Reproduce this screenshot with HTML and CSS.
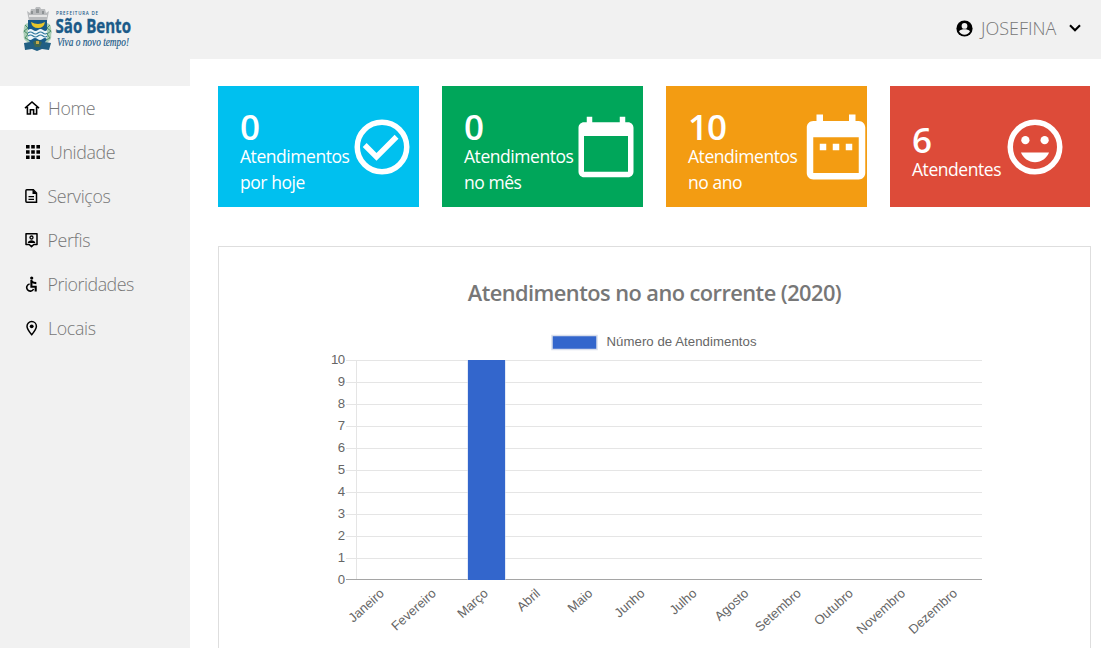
FILE: index.html
```
<!DOCTYPE html>
<html lang="pt-BR">
<head>
<meta charset="utf-8">
<title>São Bento</title>
<link rel="stylesheet" href="styles.css">
</head>
<body>
<header class="topbar">
  <svg class="logo" width="122" height="50" viewBox="0 0 122 50">
    <path d="M6 16C0 18 3 22 1 25c2 3-1 6 3 9l3 3V16zM25 16c6 2 3 6 5 9-2 3 1 6-3 9l-3 3V16z" fill="#a9cdb6"/>
    <path d="M3 18l3 3-4 3 4 3-3 4 4 2M28 18l-3 3 4 3-4 3 3 4-4 2" fill="none" stroke="#4d8f68"/>
    <path d="M5 4l3 2 1-4h4l1-2h4l1 2h4l1 4 3-2-2 10H7z" fill="#b9bbbd"/>
    <path d="M9 4v3h2V4zm5-2v4h3V2zm6 2v3h2V4z" fill="#8e9294"/>
    <path d="M7 9h18" stroke="#e5e5e5" stroke-width="2"/>
    <path d="M6 13h19v17q0 7-9.500 11Q6 37 6 30z" fill="#175a88"/>
    <path d="M9 15q7 4 14 0-1 6-7 6t-7-6z" fill="#e7c72c"/>
    <path d="M6 23q2.500-2 5 0t5 0 5 0 4 0v9q-2-2-4.500 0t-5 0-5 0-4.500 0z" fill="#edf5f8"/>
    <path d="M6 26q2.500-2 5 0t5 0 5 0 4 0M6 29q2.500-2 5 0t5 0 5 0 4 0" fill="none" stroke="#2d769c" stroke-width="1.200"/>
    <path d="M2 36l6-1 7 4 7-4 7 1-2 7-7-1-5 2-5-2-7 1z" fill="#215f83"/>
    <path d="M11 35l4-2 5 2-2 5h-5z" fill="#3e6752"/><path d="M14 34h3v3h-3z" fill="#c3a849"/>
    <text class="logo-top" x="34" y="8" textLength="42">PREFEITURA DE</text>
    <text class="logo-name" x="33.500" y="26" textLength="75.500" lengthAdjust="spacingAndGlyphs">São Bento</text>
    <text class="logo-tag" x="35" y="39" textLength="72" lengthAdjust="spacingAndGlyphs">Viva o novo tempo!</text>
  </svg>
  <div class="user">
    <svg width="17" height="17" viewBox="2 2 20 20"><circle cx="12" cy="12" r="9.500"/><circle cx="12" cy="9" r="3.400" fill="#f1f1f1"/><path d="M5.500 15.300C7 13.500 9.500 13 12 13s5 .5 6.500 2.300C17 18 15 19.400 12 19.400S7 18 5.500 15.300z" fill="#f1f1f1"/></svg>
    <span class="user-name">JOSEFINA</span>
    <svg width="12" height="8" viewBox="0 0 12 8"><path d="M1 1.200l5 5 5-5" fill="none" stroke="#000" stroke-width="2.100"/></svg>
  </div>
</header>
<div class="layout">
  <nav class="sidebar">
    <a class="item active"><svg class="nav-icon" viewBox="0 0 16 16"><path d="M1 8.200L8 2l7 6.200M3.400 7v7h3V9.800h3.200V14h3V7" fill="none" stroke="#000" stroke-width="1.600"/></svg><span class="t-home">Home</span></a>
    <a class="item"><svg class="nav-icon wide" viewBox="0 0 16 16"><path d="M1 1h3.600v3.600H1zm5.200 0h3.600v3.600H6.200zm5.200 0H15v3.600h-3.600zM1 6.200h3.600v3.600H1zm5.200 0h3.600v3.600H6.200zm5.200 0H15v3.600h-3.600zM1 11.400h3.600V15H1zm5.200 0h3.600V15H6.200zm5.200 0H15V15h-3.600z"/></svg><span class="t-unit">Unidade</span></a>
    <a class="item"><svg class="nav-icon" viewBox="0 0 16 16"><path d="M2.800 1.800h6.500l3.200 3.300v9.100H2.800q-.9 0-.9-.9V2.700q0-.9.9-.9z" fill="none" stroke="#000" stroke-width="1.500"/><path d="M8.500 1.500V6H13zM4.500 8h5.500v1.300H4.500zm0 2.700h5.500V12H4.500z"/></svg><span class="t-serv">Serviços</span></a>
    <a class="item"><svg class="nav-icon" viewBox="0 0 16 16"><path d="M2 1.800h11v10.700H9.800L7.500 14.600 5.200 12.500H2z" fill="none" stroke="#000" stroke-width="1.500" stroke-linejoin="round"/><circle cx="7.500" cy="5.500" r="1.500" fill="none" stroke="#000" stroke-width="1.300"/><path d="M3.700 10.900c.5-3.400 7.100-3.400 7.600 0z"/></svg><span class="t-perf">Perfis</span></a>
    <a class="item"><svg class="nav-icon" viewBox="0 0 16 16"><circle cx="7.700" cy="2.100" r="1.600"/><path d="M7.400 4v6.800h4.300v4.700M7.400 5.100c1.200 1.400 2.800 2 4.900 2" fill="none" stroke="#000" stroke-width="2.100"/><path d="M5.600 8a3.600 3.600 0 1 0 4 5" fill="none" stroke="#000" stroke-width="1.600"/></svg><span class="t-prio">Prioridades</span></a>
    <a class="item"><svg class="nav-icon" viewBox="0 0 16 16"><path d="M7.700 1.600a4.700 4.700 0 0 0-4.700 4.700c0 3 4.700 8.400 4.700 8.400s4.700-5.400 4.700-8.400a4.700 4.700 0 0 0-4.700-4.700z" fill="none" stroke="#000" stroke-width="1.500"/><circle cx="7.700" cy="6.300" r="1.900"/></svg><span class="t-loca">Locais</span></a>
  </nav>
  <main class="content">
    <section class="cards">
      <article class="card blue"><div class="card-text"><strong>0</strong><span>Atendimentos</span><span>por hoje</span></div>
        <svg width="66" height="66" viewBox="0 0 24 24"><circle cx="12" cy="12" r="9" fill="none" stroke="#fff" stroke-width="2"/><path d="M16.590 7.580L10 14.170l-3.590-3.580L5 12l5 5 8-8z"/></svg></article>
      <article class="card green"><div class="card-text"><strong>0</strong><span>Atendimentos</span><span>no mês</span></div>
        <svg width="66" height="66" viewBox="0 0 24 24"><path d="M20 3h-1V1h-2v2H7V1H5v2H4c-1.100 0-2 .9-2 2v16c0 1.100.9 2 2 2h16c1.100 0 2-.9 2-2V5c0-1.100-.9-2-2-2zm0 18H4V8h16v13z"/></svg></article>
      <article class="card orange"><div class="card-text"><strong>10</strong><span>Atendimentos</span><span>no ano</span></div>
        <svg width="78" height="78" viewBox="0 0 24 24"><path d="M9 11H7v2h2zm4 0h-2v2h2zm4 0h-2v2h2zM19 4h-1V2h-2v2H8V2H6v2H5c-1.110 0-1.990.9-1.990 2L3 20c0 1.100.89 2 2 2h14c1.100 0 2-.9 2-2V6c0-1.100-.9-2-2-2zm0 16H5V9h14v11z"/></svg></article>
      <article class="card red"><div class="card-text attendants"><strong>6</strong><span>Atendentes</span></div>
        <svg width="66" height="66" viewBox="0 0 24 24"><circle cx="12" cy="12" r="9" fill="none" stroke="#fff" stroke-width="2"/><circle cx="8.500" cy="9.500" r="1.500"/><circle cx="15.500" cy="9.500" r="1.500"/><path d="M12 17.500c2.330 0 4.310-1.460 5.110-3.500H6.890c.8 2.040 2.780 3.500 5.110 3.500z"/></svg></article>
    </section>
    <section class="panel">
      <h2 class="panel-title">Atendimentos no ano corrente (2020)</h2>
      <svg class="chart" width="871" height="330" viewBox="219 318 871 330">
        <rect x="552" y="335.500" width="45" height="14" fill="#36c" stroke="#d9dfec" stroke-width="1.500"/>
        <text x="606.500" y="346" textLength="150">Número de Atendimentos</text>
        <path class="grid" d="M346 360.500h636M346 382.500h636M346 404.500h636M346 426.500h636M346 448.500h636M346 470.500h636M346 492.500h636M346 514.500h636M346 536.500h636M346 558.500h636M356.500 360v220"/>
        <path d="M346 579.500h636" stroke="#a5a5a5"/>
        <rect x="467.500" y="360" width="38" height="220" fill="#c9d6f0"/><rect x="468" y="360" width="37" height="220" fill="#36c"/>
        <g text-anchor="end">
          <text x="345" y="364" textLength="14">10</text><text x="345" y="386">9</text><text x="345" y="408">8</text><text x="345" y="430">7</text><text x="345" y="452">6</text><text x="345" y="474">5</text><text x="345" y="496">4</text><text x="345" y="518">3</text><text x="345" y="540">2</text><text x="345" y="562">1</text><text x="345" y="584">0</text>
          <g class="months">
          <text transform="translate(385 594.500) rotate(-42)">Janeiro</text>
          <text transform="translate(437 594.500) rotate(-42)">Fevereiro</text>
          <text transform="translate(489 594.500) rotate(-42)">Março</text>
          <text transform="translate(541 594.500) rotate(-42)">Abril</text>
          <text transform="translate(593.500 594.500) rotate(-42)">Maio</text>
          <text transform="translate(645.500 594.500) rotate(-42)">Junho</text>
          <text transform="translate(697.500 594.500) rotate(-42)">Julho</text>
          <text transform="translate(749.500 594.500) rotate(-42)">Agosto</text>
          <text transform="translate(802 594.500) rotate(-42)">Setembro</text>
          <text transform="translate(854 594.500) rotate(-42)">Outubro</text>
          <text transform="translate(906 594.500) rotate(-42)">Novembro</text>
          <text transform="translate(958 594.500) rotate(-42)">Dezembro</text>
          </g>
        </g>
      </svg>
    </section>
  </main>
</div>
</body>
</html>
```
FILE: styles.css
```
* { box-sizing: border-box; }
body { margin: 0; height: 648px; overflow: hidden; background: #fff; font-family: "Open Sans", "Noto Sans", sans-serif; color: #777; }
svg { display: block; flex: none; }
.topbar { height: 59px; background: #f1f1f1; display: flex; justify-content: space-between; align-items: flex-start; padding: 7px 20px 0 22px; }
.logo text { fill: #1b5a88; }
.logo-top { font-size: 4.500px; font-weight: 600; }
.logo-name { font: 700 20px "Open Sans", sans-serif; stroke: #1b5a88; stroke-width: .4px; }
.logo-tag { font: italic 500 13px "Liberation Serif", serif; stroke: #1b5a88; stroke-width: .2px; }
.user { display: flex; align-items: center; height: 42px; }
.user-name { font-size: 18px; font-weight: 300; width: 76px; margin: 0 12px 0 8px; letter-spacing: 0; white-space: nowrap; }
.layout { display: flex; height: 589px; }
.sidebar { width: 190px; background: #f1f1f1; padding-top: 27px; flex: none; }
.item { height: 44px; display: flex; align-items: center; padding-left: 24px; gap: 8px; font-size: 17.800px; font-weight: 300; line-height: 44px; }
.active { background: #fff; }
.nav-icon { width: 16px; height: 16px; }
.nav-icon.wide { margin: 0 1px 0 1px; }
.item span { letter-spacing: -.35px; }
.item .t-serv, .item .t-perf, .item .t-prio { margin-left: -.5px; }
.item .t-prio { letter-spacing: -.45px; }
.content { flex: 1; padding: 27px 10px 0 28px; min-width: 0; }
.cards { display: flex; gap: 23px; height: 121px; }
.card { width: 201px; flex: none; padding-left: 22px; display: flex; align-items: center; color: #fff; }
.card:last-child { width: 200px; }
.card svg { fill: #fff; }
.blue { background: #00c0ef; }
.green { background: #00a65a; }
.orange { background: #f39c12; }
.red { background: #dd4b39; }
.card-text { width: 109px; flex: none; display: flex; flex-direction: column; padding-top: 12px; font-size: 17.500px; line-height: 26px; letter-spacing: -.45px; white-space: nowrap; }
.attendants { width: 90px; }
.card-text strong { font-size: 35px; font-weight: 600; line-height: 32px; letter-spacing: -1px; }
.panel { margin-top: 39px; border: 1px solid #dedede; height: 420px; width: 873px; }
.panel-title { margin: 0; padding-top: 31px; height: 71px; text-align: center; font-size: 21.800px; font-weight: 600; line-height: 30px; letter-spacing: -.55px; }
.chart text { font-family: "Liberation Sans", Arial, sans-serif; font-size: 13.200px; fill: #666; }
.chart .months text { font-size: 13px; }
.grid { stroke: #e5e5e5; fill: none; }
```
